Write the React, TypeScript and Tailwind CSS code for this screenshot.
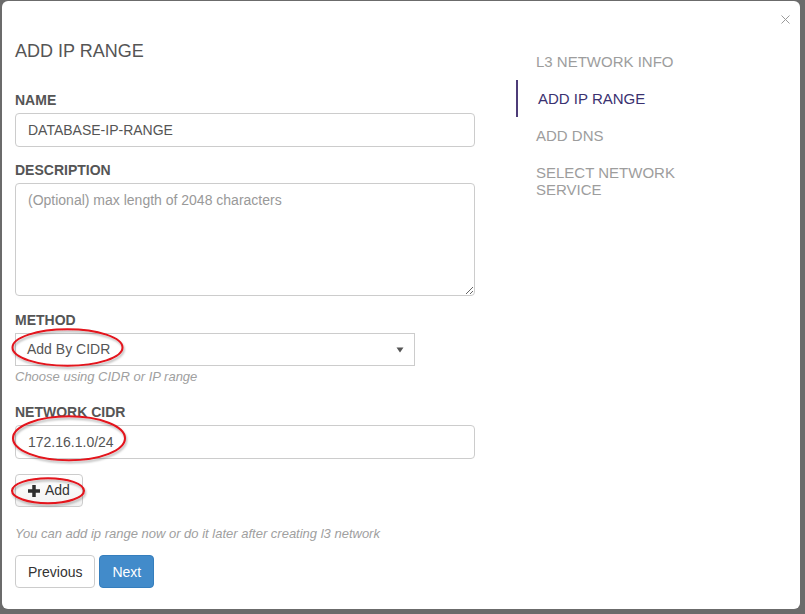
import React from "react";

export default function App() {
  return (
    <div
      className="relative w-[805px] h-[614px] overflow-hidden bg-[#6b6b6b] pt-[1px] pl-[2px]"
      style={{ fontFamily: '"Liberation Sans", Arial, Helvetica, sans-serif' }}
    >
      <div className="relative w-[798px] h-[608px] bg-white rounded-[6px] flex pt-[40px] pl-[13px]">
        {/* close */}
        <div className="absolute right-[10px] top-[14px] w-[9px] h-[9px]">
          <svg width="9" height="9" viewBox="0 0 9 9">
            <path d="M0.5 0.5 L8.5 8.5 M8.5 0.5 L0.5 8.5" stroke="#9a9a9a" strokeWidth="1" />
          </svg>
        </div>

        {/* Left column */}
        <div className="w-[460px] flex flex-col">
          <div className="text-[18px] leading-[20px] text-[#555] mb-[29px]">ADD IP RANGE</div>

          <label className="block text-[14px] leading-[20px] font-bold text-[#555] mb-[3px]">NAME</label>
          <input
            readOnly
            value="DATABASE-IP-RANGE"
            className="h-[34px] w-full border border-[#ccc] rounded-[4px] px-[12px] text-[14px] text-[#555] outline-none mb-[13px]"
          />

          <label className="block text-[14px] leading-[20px] font-bold text-[#555] mb-[3px]">DESCRIPTION</label>
          <textarea
            readOnly
            placeholder="(Optional) max length of 2048 characters"
            className="block h-[113px] w-full border border-[#ccc] rounded-[4px] px-[12px] py-[6px] text-[14px] leading-[20px] text-[#555] placeholder:text-[#999] outline-none mb-[14px]"
          />

          <label className="block text-[14px] leading-[20px] font-bold text-[#555] mb-[3px]">METHOD</label>
          <div className="h-[33px] w-[400px] border border-[#ccc] flex items-center justify-between pl-[11px] pr-[10px] text-[14px] text-[#555]">
            <span>Add By CIDR</span>
            <svg width="8" height="6" viewBox="0 0 8 6">
              <path d="M0.5 0.5 L7.5 0.5 L4 5.5 Z" fill="#555" />
            </svg>
          </div>
          <div className="mt-[2px] text-[13px] leading-[18px] italic text-[#a0a0a0] mb-[16px]">
            Choose using CIDR or IP range
          </div>

          <label className="block text-[14px] leading-[20px] font-bold text-[#555] mb-[3px]">NETWORK CIDR</label>
          <input
            readOnly
            value="172.16.1.0/24"
            className="h-[34px] w-full border border-[#ccc] rounded-[4px] px-[12px] text-[14px] text-[#555] outline-none"
          />

          <div className="mt-[15px] flex">
            <button className="h-[33px] flex items-center gap-[5px] border border-[#ccc] rounded-[4px] bg-gradient-to-b from-white to-[#f2f2f2] pl-[12px] pr-[12px] text-[14px] text-[#333]">
              <svg width="12" height="12" viewBox="0 0 12 12">
                <rect x="4.25" y="0" width="3.5" height="12" fill="#2e2e2e" />
                <rect x="0" y="4.25" width="12" height="3.5" fill="#2e2e2e" />
              </svg>
              <span>Add</span>
            </button>
          </div>

          <div className="mt-[18px] text-[13px] leading-[18px] italic text-[#a0a0a0]">
            You can add ip range now or do it later after creating l3 network
          </div>

          <div className="mt-[12px] flex gap-[4px]">
            <button className="h-[33px] border border-[#ccc] rounded-[4px] bg-white px-[12px] pt-[1px] text-[14px] text-[#333]">
              Previous
            </button>
            <button className="h-[33px] border border-[#357ebd] rounded-[4px] bg-[#428bca] px-[12px] pt-[1px] text-[14px] text-white">
              Next
            </button>
          </div>
        </div>

        {/* Right nav */}
        <div className="ml-[41px] mt-[2px] w-[190px] flex flex-col text-[15px] leading-[17px]">
          <div className="py-[10px] pl-[20px] text-[#9d9d9d]">L3 NETWORK INFO</div>
          <div className="py-[10px] pl-[20px] border-l-2 border-[#4d3c78] text-[#3a3170]">ADD IP RANGE</div>
          <div className="py-[10px] pl-[20px] text-[#9d9d9d]">ADD DNS</div>
          <div className="py-[10px] pl-[20px] text-[#9d9d9d] w-[170px]">SELECT NETWORK SERVICE</div>
        </div>
      </div>

      {/* red annotation ellipses */}
      <svg className="absolute left-0 top-0 pointer-events-none" width="805" height="614">
        <defs>
          <filter id="sh" x="-20%" y="-30%" width="140%" height="160%">
            <feDropShadow dx="1" dy="2" stdDeviation="1.2" floodColor="#000" floodOpacity="0.3" />
          </filter>
        </defs>
        <g fill="none" stroke="#e3121b" strokeWidth="2" filter="url(#sh)">
          <ellipse cx="67.5" cy="347.5" rx="55" ry="18.2" />
          <ellipse cx="69" cy="438.3" rx="56" ry="22" />
          <ellipse cx="48" cy="490.7" rx="36" ry="12.5" />
        </g>
      </svg>
    </div>
  );
}
